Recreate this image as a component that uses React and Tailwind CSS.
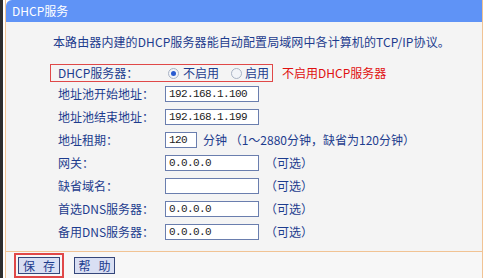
import React from "react";

const font = { fontFamily: '"Noto Sans CJK SC", "Noto Sans", sans-serif' };

function Radio({ checked }) {
    return (
        <span className="w-[11px] h-[11px] rounded-full border border-[#a9b3c4] bg-[#f2f4f8] flex items-center justify-center shrink-0">
            {checked && <span className="w-[5px] h-[5px] rounded-full bg-[#2a5bd0]" />}
        </span>
    );
}

function Field({ value, w = "w-[94px]" }) {
    return (
        <div className={`${w} h-[16px] border border-[#6a7eae] bg-white flex items-center pl-[3px] text-[11px] tracking-[-0.6px] text-[#222] font-['Liberation_Mono',monospace]`}>
            {value}
        </div>
    );
}

function Row({ label, children }) {
    return (
        <div className="h-[23px] flex items-center pl-[8px]">
            <div className="w-[107px] shrink-0">{label}</div>
            {children}
        </div>
    );
}

function Btn({ a, b, w }) {
    return (
        <button className={`${w} h-[17px] border border-[#34467a] bg-[#d9dff3] text-[#1d3c8e] text-[12px] leading-[15px] flex items-center justify-center gap-[8px] whitespace-nowrap`}>
            <span>{a}</span>
            <span>{b}</span>
        </button>
    );
}

const Optional = () => <span className="ml-[6px]">（可选）</span>;

export default function App() {
    return (
        <div className="w-[486px] h-[278px] flex bg-white overflow-hidden text-[12px] leading-[16px] text-[#1d3c8e]" style={font}>
            <div className="w-[3px] bg-[#2e2e2e]" />
            <div className="w-[2px]" />
            <div className="w-[478px] flex flex-col border-l border-r border-[#f1c394]">
                {/* header */}
                <div className="h-[22px] bg-[#5f93f6] rounded-tl-[6px] flex items-center pl-[6px] text-white">
                    DHCP服务
                </div>

                {/* body */}
                <div className="h-[230px] bg-[#f4f4f4] border-b border-[#f1c394] pt-[12px]">
                    <p className="pl-[47px] tracking-[0.1px]">本路由器内建的DHCP服务器能自动配置局域网中各计算机的TCP/IP协议。</p>

                    <div className="ml-[44px] mt-[14px]">
                        <div className="w-[223px] h-[18px] border border-[#e04848] flex items-center pl-[7px]">
                            <div className="w-[110px] shrink-0">DHCP服务器：</div>
                            <Radio checked />
                            <span className="ml-[4px]">不启用</span>
                            <span className="ml-[12px]"><Radio /></span>
                            <span className="ml-[3px]">启用</span>
                        </div>
                        <div className="relative">
                            <span className="absolute left-[232px] top-[-17px] text-[#e01010] whitespace-nowrap">不启用DHCP服务器</span>
                        </div>

                        <Row label="地址池开始地址："><Field value="192.168.1.100" /></Row>
                        <Row label="地址池结束地址："><Field value="192.168.1.199" /></Row>
                        <Row label="地址租期：">
                            <Field value="120" w="w-[32px]" />
                            <span className="ml-[6px]">分钟 （1～2880分钟，缺省为120分钟）</span>
                        </Row>
                        <Row label="网关："><Field value="0.0.0.0" /><Optional /></Row>
                        <Row label="缺省域名："><Field value="" /><Optional /></Row>
                        <Row label="首选DNS服务器："><Field value="0.0.0.0" /><Optional /></Row>
                        <Row label="备用DNS服务器："><Field value="0.0.0.0" /><Optional /></Row>
                    </div>
                </div>

                {/* buttons */}
                <div className="flex-1 bg-[#f7f7f7] flex items-center pl-[8px] gap-[10px]">
                    <div className="border-2 border-[#e04848] p-[2px]">
                        <Btn a="保" b="存" w="w-[42px]" />
                    </div>
                    <Btn a="帮" b="助" w="w-[41px]" />
                </div>
            </div>
            <div className="flex-1" />
        </div>
    );
}
